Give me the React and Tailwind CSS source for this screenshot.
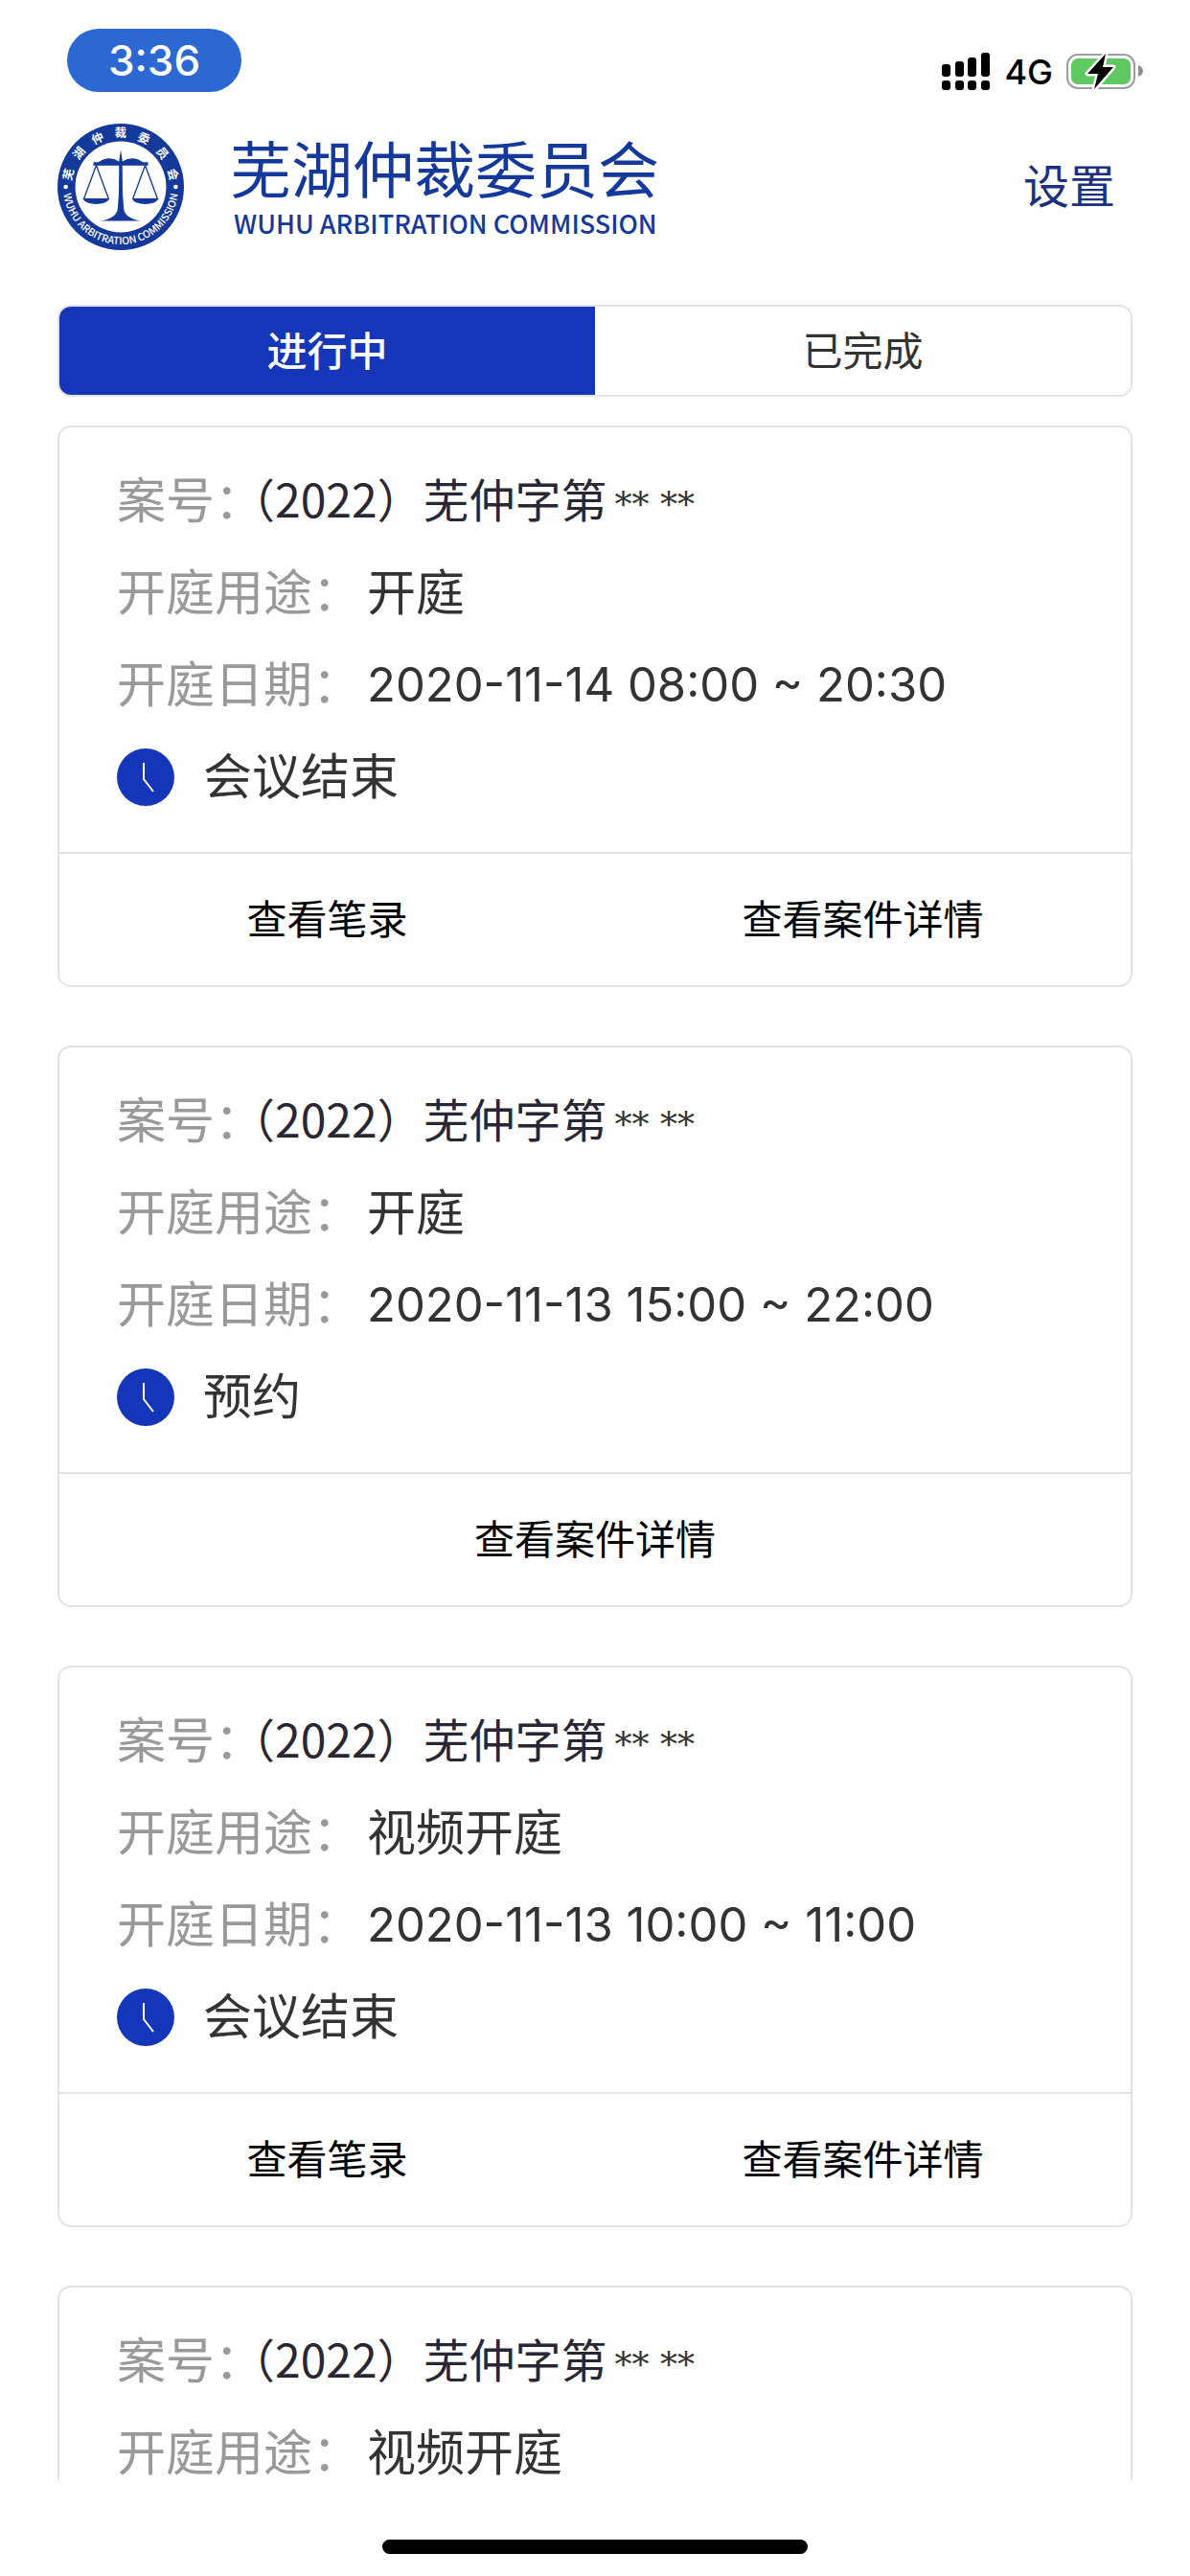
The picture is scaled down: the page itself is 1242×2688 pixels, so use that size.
import { useState } from "react";
import clsx from "clsx";

const CASES = [
  { id: 1, purpose: "开庭", date: "2020-11-14 08:00 ~ 20:30", status: "会议结束", actions: ["查看笔录", "查看案件详情"] },
  { id: 2, purpose: "开庭", date: "2020-11-13 15:00 ~ 22:00", status: "预约", actions: ["查看案件详情"] },
  { id: 3, purpose: "视频开庭", date: "2020-11-13 10:00 ~ 11:00", status: "会议结束", actions: ["查看笔录", "查看案件详情"] },
  { id: 4, purpose: "视频开庭" },
];

const TABS = ["进行中", "已完成"];

const SEAL_CHARS = ["芜", "湖", "仲", "裁", "委", "员", "会"];

const StatusBar = () => (
  <div className="flex items-start justify-between pt-[30px] pr-[49px] pl-[70px]">
    <div className="flex h-[66px] w-[182px] items-center justify-center rounded-full bg-[#2c68d2] text-[44px] font-medium text-white">
      3:36
    </div>
    <div className="flex items-center gap-[14px] pt-[25px] text-black">
      <svg width="51" height="40" viewBox="0 0 51 40" fill="currentColor">
        <rect x="0" y="12" width="9" height="13" rx="3" />
        <rect x="14" y="9" width="9" height="16" rx="3" />
        <rect x="27" y="5" width="9" height="20" rx="3" />
        <rect x="41" y="0" width="9" height="25" rx="3" />
        <rect x="0" y="29" width="9" height="10" rx="3" />
        <rect x="14" y="29" width="9" height="10" rx="3" />
        <rect x="27" y="29" width="9" height="10" rx="3" />
        <rect x="41" y="29" width="9" height="10" rx="3" />
      </svg>
      <span className="text-[36px] leading-10 font-medium">4G</span>
      <svg width="80" height="40" viewBox="0 0 80 40">
        <rect x="1" y="2" width="70" height="35" rx="11" fill="#fff" stroke="#9d9d9f" strokeWidth="2" />
        <rect x="5" y="6" width="62" height="27" rx="7" fill="#5fc860" />
        <path d="M75 13c3 1 5 3 5 6s-2 5-5 6z" fill="#8f8f92" />
        <path
          d="M41 1 22 22h11l-4 16 20-23H38z"
          fill="#000"
          stroke="#fff"
          strokeWidth="5"
          strokeLinejoin="round"
          paintOrder="stroke"
        />
      </svg>
    </div>
  </div>
);

const Seal = () => (
  <svg width="132" height="132" viewBox="-199 -199 398 398" fill="#15399a" className="shrink-0">
    <defs>
      <path id="seal-arc" d="M-181 0A181 181 0 0 0 181 0" />
    </defs>
    <circle r="199" />
    <circle r="143" fill="#fff" />
    {SEAL_CHARS.map((char, i) => (
      <text
        key={char}
        transform={`rotate(${(i - 3) * 25.5})`}
        y="-156"
        textAnchor="middle"
        fill="#fff"
        className="font-['Noto_Sans_CJK_SC',sans-serif] text-[37px] font-bold"
      >
        {char}
      </text>
    ))}
    <circle cx="-173" r="7" fill="#fff" />
    <circle cx="173" r="7" fill="#fff" />
    <text fill="#fff" textAnchor="middle" className="font-['Noto_Sans_CJK_SC',sans-serif] text-[32px] font-medium">
      <textPath href="#seal-arc" startOffset="50%">
        WUHU ARBITRATION COMMISSION
      </textPath>
    </text>
    {/* Scales */}
    <path d="M0-116 5-84 6 20 10 72Q16 98 62 107H-62Q-16 98-10 72L-6 20-5-84Z" />
    <path d="M-86-78H-70Q-38-100-5-80H5Q38-100 70-78H86V-67H-86Z" />
    <path d="M-77-68-116 38M-77-68-38 38M77-68 116 38M77-68 38 38" stroke="#15399a" strokeWidth="4" />
    <path d="M-120 36H-35Q-44 54-77 54T-120 36ZM120 36H35Q44 54 77 54T120 36Z" />
  </svg>
);

const Header = ({ onSettings }) => (
  <header className="flex items-center justify-between pt-[33px] pr-[78px] pl-[60px]">
    <div className="flex items-center gap-12 font-['Noto_Sans_CJK_SC',sans-serif] text-[#15399a]">
      <Seal />
      <div className="pb-2">
        <h1 className="mb-1 text-[64px] leading-[80px]">芜湖仲裁委员会</h1>
        <p className="pl-1 text-[27px] leading-8 font-medium">WUHU ARBITRATION COMMISSION</p>
      </div>
    </div>
    <button type="button" onClick={onSettings} className="text-[48px] text-[#1d2f7d]">
      设置
    </button>
  </header>
);

const ClockIcon = () => (
  <svg width="60" height="60" viewBox="0 0 60 60" className="shrink-0">
    <circle cx="30" cy="30" r="30" fill="#1536b8" />
    <path d="M28 15v17l10 13" fill="none" stroke="#fff" strokeWidth="2" />
  </svg>
);

const CaseCard = ({ item }) => (
  <article className="shrink-0 rounded-[14px] border-2 border-[#e3e3e3]">
    <div className="px-[60px] pt-[29px] pb-[30px] text-[51px] leading-[96px] text-[#333]">
      <div className="flex">
        <span className="text-[#999]">案号：</span>
        <span className="-ml-3 font-['Noto_Sans_CJK_SC',sans-serif] text-[48px] leading-[88px] text-[#292733] [text-spacing-trim:trim-start]">
          （2022）芜仲字第
        </span>
        <span className="pt-2 pl-2 font-['DejaVu_Serif',serif] text-[36px] leading-[88px]">** **</span>
      </div>
      <div className="flex gap-1.5">
        <span className="text-[#999]">开庭用途：</span>
        <span>{item.purpose}</span>
      </div>
      {item.date && (
        <div className="flex gap-1.5">
          <span className="text-[#999]">开庭日期：</span>
          <span className="text-[49px]">{item.date}</span>
        </div>
      )}
      {item.status && (
        <div className="flex items-center gap-[30px]">
          <ClockIcon />
          <span>{item.status}</span>
        </div>
      )}
    </div>
    {item.actions && (
      <div className="flex border-t-2 border-[#e3e3e3]">
        {item.actions.map((action) => (
          <button key={action} type="button" className="h-[137px] flex-1 text-[42px] text-black">
            {action}
          </button>
        ))}
      </div>
    )}
  </article>
);

const App = () => {
  const [activeTab, setActiveTab] = useState(TABS[0]);

  return (
    <div className="flex h-screen flex-col bg-white font-['Inter','Noto_Sans_CJK_SC',sans-serif]">
      <StatusBar />
      <Header onSettings={() => {}} />

      <div className="mx-[60px] mt-[57px] flex shrink-0 overflow-hidden rounded-[14px] border-2 border-[#e3e3e3]">
        {TABS.map((tab) => (
          <button
            key={tab}
            type="button"
            onClick={() => setActiveTab(tab)}
            className={clsx(
              "h-[92px] flex-1 text-[42px]",
              activeTab === tab ? "bg-[#1536b8] font-medium text-white" : "bg-white text-[#333]"
            )}
          >
            {tab}
          </button>
        ))}
      </div>

      <main className="mx-[60px] mt-[30px] flex min-h-0 flex-1 flex-col gap-[61px] overflow-hidden">
        {CASES.map((item) => (
          <CaseCard key={item.id} item={item} />
        ))}
      </main>

      {/* Home indicator */}
      <div className="flex h-[100px] shrink-0 items-end justify-center pb-[23px]">
        <div className="h-[15px] w-[444px] rounded-full bg-black" />
      </div>
    </div>
  );
};

export default App;
